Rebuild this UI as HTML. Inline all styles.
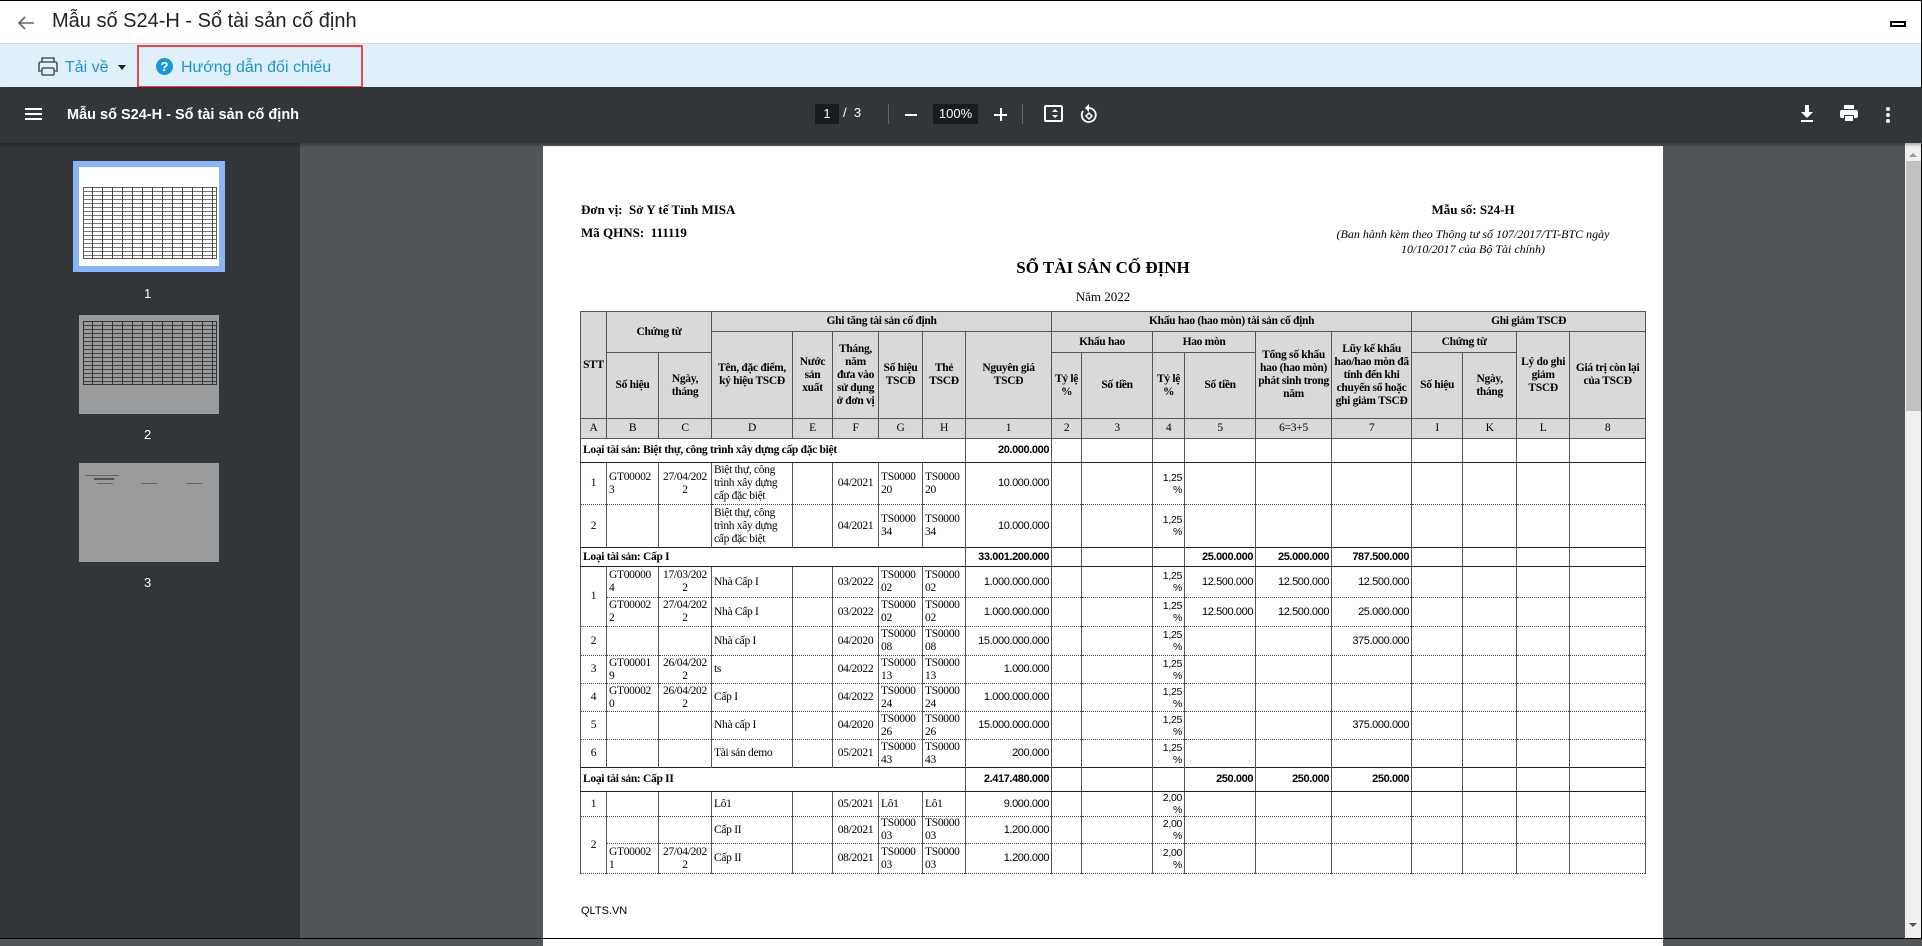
<!DOCTYPE html>
<html><head><meta charset="utf-8">
<style>
*{margin:0;padding:0;box-sizing:border-box}
body{width:1922px;height:939px;overflow:hidden;position:relative;background:#525659;font-family:"Liberation Sans",sans-serif}
.abs{position:absolute}
#tb{left:0;top:0;width:1922px;height:44px;background:#fff;border-bottom:1px solid #d6d6d6;border-top:1px solid #000;border-right:1px solid #000}
#t2{left:0;top:44px;width:1922px;height:43px;background:#dff0fb;border-right:1px solid #000}
#t3{left:0;top:87px;width:1922px;height:56px;background:#323639;box-shadow:0 2px 3px rgba(0,0,0,.3);z-index:2}
#side{left:0;top:143px;width:300px;height:796px;background:#323639}
#page{left:543px;top:146px;width:1120px;height:800px;background:#fff}
#sb{left:1905px;top:143px;width:17px;height:796px;background:#f0f0f0}
.serif{font-family:"Liberation Serif",serif}
table{border-collapse:collapse;table-layout:fixed;position:absolute;left:37px;top:165px;width:1065px;font-family:"Liberation Serif",serif;font-size:11.5px;letter-spacing:-0.3px;color:#000}
td{border-left:1.5px solid #555;border-right:1.5px solid #555;padding:0 2px;vertical-align:middle;line-height:13px;overflow:hidden}
thead td{background:#d9d9d9;border:1.5px solid #555;text-align:center;font-weight:bold}
tbody td{border-top:1px dotted #444;border-bottom:1px dotted #444}
tr.lo td{border-top:1.5px solid #222;border-bottom:1.5px solid #222;font-weight:bold}
.n{font-family:"Liberation Sans",sans-serif;font-size:11px;text-align:right;letter-spacing:-0.4px}
.c{text-align:center}
.p{font-family:"Liberation Sans",sans-serif;font-size:10.5px;text-align:right;line-height:12px}
</style></head><body>
<div id="tb" class="abs">
  <svg class="abs" style="left:16px;top:13px" width="20" height="18" viewBox="0 0 20 18"><path d="M18 9H3M9 3L3 9l6 6" stroke="#666" stroke-width="1.6" fill="none"/></svg>
  <div class="abs" style="left:52px;top:9px;font-size:20px;color:#222">Mẫu số S24-H - Sổ tài sản cố định</div>
  <div class="abs" style="left:1890px;top:20px;width:16px;height:6px;border:2px solid #000"></div>
</div>
<div id="t2" class="abs">
  <svg class="abs" style="left:37px;top:12px" width="22" height="21" viewBox="0 0 22 21"><path d="M5 6V2h12v4M4 15H2V8q0-2 2-2h14q2 0 2 2v7h-2" stroke="#555" stroke-width="1.6" fill="none"/><rect x="5" y="12" width="12" height="7" rx="1" stroke="#555" stroke-width="1.6" fill="none"/></svg>
  <div class="abs" style="left:65px;top:15px;font-size:16px;color:#1f93c9">Tải về</div>
  <div class="abs" style="left:118px;top:21px;width:0;height:0;border-left:4px solid transparent;border-right:4px solid transparent;border-top:5px solid #222"></div>
  <div class="abs" style="left:137px;top:1px;width:226px;height:43px;border:2px solid #f0454a"></div>
  <div class="abs" style="left:156px;top:14px;width:17px;height:17px;border-radius:50%;background:#1b9ad0;color:#fff;font-size:13px;font-weight:bold;text-align:center;line-height:17px">?</div>
  <div class="abs" style="left:181px;top:15px;font-size:16px;color:#1f93c9">Hướng dẫn đối chiếu</div>
</div>
<div id="t3" class="abs">
  <div class="abs" style="left:25px;top:21px;width:17px;height:2px;background:#fff;box-shadow:0 5px 0 #fff,0 10px 0 #fff"></div>
  <div class="abs" style="left:67px;top:20px;font-size:14.5px;font-weight:bold;color:#fff">Mẫu số S24-H - Sổ tài sản cố định</div>
  <div class="abs" style="left:815px;top:17px;width:24px;height:20px;background:#191b1c;color:#fff;font-size:13px;text-align:center;line-height:20px">1</div>
  <div class="abs" style="left:843px;top:18px;color:#fff;font-size:13px">/&nbsp; 3</div>
  <div class="abs" style="left:888px;top:17px;width:1px;height:20px;background:#666"></div>
  <div class="abs" style="left:905px;top:27px;width:12px;height:2px;background:#fff"></div>
  <div class="abs" style="left:933px;top:17px;width:45px;height:20px;background:#191b1c;color:#fff;font-size:13px;text-align:center;line-height:20px">100%</div>
  <div class="abs" style="left:994px;top:27px;width:13px;height:2px;background:#fff"></div>
  <div class="abs" style="left:1000px;top:21px;width:2px;height:13px;background:#fff"></div>
  <div class="abs" style="left:1022px;top:17px;width:1px;height:20px;background:#666"></div>
  <div class="abs" style="left:1044px;top:18px;width:19px;height:17px;border:2px solid #fff;border-radius:2px"></div>
  <div class="abs" style="left:1052px;top:22px;width:0;height:0;border-left:3px solid transparent;border-right:3px solid transparent;border-bottom:3px solid #fff"></div>
  <div class="abs" style="left:1052px;top:28px;width:0;height:0;border-left:3px solid transparent;border-right:3px solid transparent;border-top:3px solid #fff"></div>
  <svg class="abs" style="left:1079px;top:16px" width="20" height="22" viewBox="0 0 20 22"><path d="M10 5a7 7 0 1 1-6 3" stroke="#fff" stroke-width="1.8" fill="none"/><path d="M10 1v8l-4-4z" fill="#fff"/><path d="M10 10l3 3-3 3-3-3z" stroke="#fff" stroke-width="1.5" fill="none"/></svg>
  <svg class="abs" style="left:1800px;top:17px" width="14" height="20" viewBox="0 0 14 20"><path d="M5 1h4v7h4l-6 6-6-6h4z" fill="#fff"/><rect x="1" y="16" width="12" height="2" fill="#fff"/></svg>
  <svg class="abs" style="left:1840px;top:18px" width="18" height="17" viewBox="0 0 18 17"><rect x="4" y="0" width="10" height="4" fill="#fff"/><rect x="0" y="5" width="18" height="8" rx="2" fill="#fff"/><rect x="4" y="10" width="10" height="7" fill="#323639"/><rect x="5" y="11" width="8" height="5" fill="#fff"/></svg>
  <div class="abs" style="left:1886px;top:20px;width:4px;height:4px;border-radius:50%;background:#fff;box-shadow:0 6px 0 #fff,0 12px 0 #fff"></div>
</div>
<div id="side" class="abs">
  <div class="abs" style="left:73px;top:18px;width:152px;height:111px;background:#8ab4f8"></div>
  <div class="abs" style="left:79px;top:24px;width:140px;height:99px;background:#fff">
    <div class="abs" style="left:4px;top:20px;width:134px;height:72px;border:1px solid #333;background:repeating-linear-gradient(#fff 0 3px,#555 3px 4px),#fff;opacity:.8"></div>
    <div class="abs" style="left:4px;top:20px;width:134px;height:72px;background:repeating-linear-gradient(90deg,transparent 0 9px,#444 9px 10px)"></div>
  </div>
  <div class="abs" style="left:144px;top:143px;color:#fff;font-size:13px">1</div>
  <div class="abs" style="left:79px;top:172px;width:140px;height:99px;background:#9a9b9d">
    <div class="abs" style="left:4px;top:6px;width:134px;height:64px;border:1px solid #333;background:repeating-linear-gradient(#9a9b9d 0 3px,#444 3px 4px)"></div>
    <div class="abs" style="left:4px;top:6px;width:134px;height:64px;background:repeating-linear-gradient(90deg,transparent 0 9px,#333 9px 10px)"></div>
  </div>
  <div class="abs" style="left:144px;top:284px;color:#fff;font-size:13px">2</div>
  <div class="abs" style="left:79px;top:320px;width:140px;height:99px;background:#9a9b9d">
    <div class="abs" style="left:6px;top:12px;width:34px;height:1px;background:#666"></div>
    <div class="abs" style="left:15px;top:15px;width:20px;height:2px;background:#555"></div>
    <div class="abs" style="left:18px;top:20px;width:16px;height:1px;background:#666"></div>
    <div class="abs" style="left:62px;top:20px;width:16px;height:1px;background:#666"></div>
    <div class="abs" style="left:107px;top:20px;width:16px;height:1px;background:#666"></div>
  </div>
  <div class="abs" style="left:144px;top:432px;color:#fff;font-size:13px">3</div>
</div>
<div id="sb" class="abs">
  <div class="abs" style="left:4px;top:10px;width:0;height:0;border-left:4px solid transparent;border-right:4px solid transparent;border-bottom:4px solid #999"></div>
  <div class="abs" style="left:1px;top:18px;width:15px;height:250px;background:#c1c1c1"></div>
  <div class="abs" style="left:4px;top:780px;width:0;height:0;border-left:4px solid transparent;border-right:4px solid transparent;border-top:4px solid #555"></div>
</div>
<div id="page" class="abs serif">
  <div class="abs" style="left:38px;top:56px;font-size:13px;font-weight:bold">Đơn vị:&nbsp; Sở Y tế Tỉnh MISA</div>
  <div class="abs" style="left:38px;top:79px;font-size:13px;font-weight:bold">Mã QHNS:&nbsp; 111119</div>
  <div class="abs" style="left:780px;top:56px;width:300px;text-align:center;font-size:13px;font-weight:bold">Mẫu số: S24-H</div>
  <div class="abs" style="left:770px;top:81px;width:320px;text-align:center;font-size:12px;font-style:italic;line-height:15px">(Ban hành kèm theo Thông tư số 107/2017/TT-BTC ngày 10/10/2017 của Bộ Tài chính)</div>
  <div class="abs" style="left:400px;top:112px;width:320px;text-align:center;font-size:17px;font-weight:bold">SỔ TÀI SẢN CỐ ĐỊNH</div>
  <div class="abs" style="left:400px;top:143px;width:320px;text-align:center;font-size:13px">Năm 2022</div>
  <table>
    <colgroup><col style="width:26px"><col style="width:52px"><col style="width:53px"><col style="width:81px"><col style="width:40px"><col style="width:46px"><col style="width:44px"><col style="width:43px"><col style="width:86px"><col style="width:30px"><col style="width:71px"><col style="width:32px"><col style="width:71px"><col style="width:76px"><col style="width:80px"><col style="width:51px"><col style="width:54px"><col style="width:53px"><col style="width:76px"></colgroup>
    <thead>
      <tr style="height:20px"><td rowspan="3">STT</td><td colspan="2" rowspan="2">Chứng từ</td><td colspan="6">Ghi tăng tài sản cố định</td><td colspan="6">Khấu hao (hao mòn) tài sản cố định</td><td colspan="4">Ghi giảm TSCĐ</td></tr>
      <tr style="height:21px"><td rowspan="2">Tên, đặc điểm, ký hiệu TSCĐ</td><td rowspan="2">Nước sản xuất</td><td rowspan="2">Tháng, năm đưa vào sử dụng ở đơn vị</td><td rowspan="2">Số hiệu TSCĐ</td><td rowspan="2">Thẻ TSCĐ</td><td rowspan="2">Nguyên giá TSCĐ</td><td colspan="2">Khấu hao</td><td colspan="2">Hao mòn</td><td rowspan="2">Tổng số khấu hao (hao mòn) phát sinh trong năm</td><td rowspan="2">Lũy kế khấu hao/hao mòn đã tính đến khi chuyển sổ hoặc ghi giảm TSCĐ</td><td colspan="2">Chứng từ</td><td rowspan="2">Lý do ghi giảm TSCĐ</td><td rowspan="2">Giá trị còn lại của TSCĐ</td></tr>
      <tr style="height:66px"><td>Số hiệu</td><td>Ngày, tháng</td><td>Tỷ lệ %</td><td>Số tiền</td><td>Tỷ lệ %</td><td>Số tiền</td><td>Số hiệu</td><td>Ngày, tháng</td></tr>
      <tr style="height:20px"><td style="font-weight:normal">A</td><td style="font-weight:normal">B</td><td style="font-weight:normal">C</td><td style="font-weight:normal">D</td><td style="font-weight:normal">E</td><td style="font-weight:normal">F</td><td style="font-weight:normal">G</td><td style="font-weight:normal">H</td><td style="font-weight:normal">1</td><td style="font-weight:normal">2</td><td style="font-weight:normal">3</td><td style="font-weight:normal">4</td><td style="font-weight:normal">5</td><td style="font-weight:normal">6=3+5</td><td style="font-weight:normal">7</td><td style="font-weight:normal">I</td><td style="font-weight:normal">K</td><td style="font-weight:normal">L</td><td style="font-weight:normal">8</td></tr>
    </thead>
    <tbody>
      <tr class="lo" style="height:24px"><td colspan="8">Loại tài sản: Biệt thự, công trình xây dựng cấp đặc biệt</td><td class="n">20.000.000</td><td></td><td></td><td></td><td></td><td></td><td></td><td></td><td></td><td></td><td></td></tr>
      <tr style="height:42px"><td class="c">1</td><td>GT00002<br>3</td><td class="c">27/04/202<br>2</td><td>Biệt thự, công trình xây dựng cấp đặc biệt</td><td></td><td class="c">04/2021</td><td>TS0000<br>20</td><td>TS0000<br>20</td><td class="n">10.000.000</td><td></td><td></td><td class="p">1,25<br>%</td><td></td><td></td><td></td><td></td><td></td><td></td><td></td></tr>
      <tr style="height:43px"><td class="c">2</td><td></td><td></td><td>Biệt thự, công trình xây dựng cấp đặc biệt</td><td></td><td class="c">04/2021</td><td>TS0000<br>34</td><td>TS0000<br>34</td><td class="n">10.000.000</td><td></td><td></td><td class="p">1,25<br>%</td><td></td><td></td><td></td><td></td><td></td><td></td><td></td></tr>
      <tr class="lo" style="height:19px"><td colspan="8">Loại tài sản: Cấp I</td><td class="n">33.001.200.000</td><td></td><td></td><td></td><td class="n">25.000.000</td><td class="n">25.000.000</td><td class="n">787.500.000</td><td></td><td></td><td></td><td></td></tr>
      <tr style="height:31px"><td class="c" rowspan="2">1</td><td>GT00000<br>4</td><td class="c">17/03/202<br>2</td><td>Nhà Cấp I</td><td></td><td class="c">03/2022</td><td>TS0000<br>02</td><td>TS0000<br>02</td><td class="n">1.000.000.000</td><td></td><td></td><td class="p">1,25<br>%</td><td class="n">12.500.000</td><td class="n">12.500.000</td><td class="n">12.500.000</td><td></td><td></td><td></td><td></td></tr>
      <tr style="height:29px"><td>GT00002<br>2</td><td class="c">27/04/202<br>2</td><td>Nhà Cấp I</td><td></td><td class="c">03/2022</td><td>TS0000<br>02</td><td>TS0000<br>02</td><td class="n">1.000.000.000</td><td></td><td></td><td class="p">1,25<br>%</td><td class="n">12.500.000</td><td class="n">12.500.000</td><td class="n">25.000.000</td><td></td><td></td><td></td><td></td></tr>
      <tr style="height:29px"><td class="c">2</td><td></td><td></td><td>Nhà cấp I</td><td></td><td class="c">04/2020</td><td>TS0000<br>08</td><td>TS0000<br>08</td><td class="n">15.000.000.000</td><td></td><td></td><td class="p">1,25<br>%</td><td></td><td></td><td class="n">375.000.000</td><td></td><td></td><td></td><td></td></tr>
      <tr style="height:28px"><td class="c">3</td><td>GT00001<br>9</td><td class="c">26/04/202<br>2</td><td>ts</td><td></td><td class="c">04/2022</td><td>TS0000<br>13</td><td>TS0000<br>13</td><td class="n">1.000.000</td><td></td><td></td><td class="p">1,25<br>%</td><td></td><td></td><td></td><td></td><td></td><td></td><td></td></tr>
      <tr style="height:28px"><td class="c">4</td><td>GT00002<br>0</td><td class="c">26/04/202<br>2</td><td>Cấp I</td><td></td><td class="c">04/2022</td><td>TS0000<br>24</td><td>TS0000<br>24</td><td class="n">1.000.000.000</td><td></td><td></td><td class="p">1,25<br>%</td><td></td><td></td><td></td><td></td><td></td><td></td><td></td></tr>
      <tr style="height:28px"><td class="c">5</td><td></td><td></td><td>Nhà cấp I</td><td></td><td class="c">04/2020</td><td>TS0000<br>26</td><td>TS0000<br>26</td><td class="n">15.000.000.000</td><td></td><td></td><td class="p">1,25<br>%</td><td></td><td></td><td class="n">375.000.000</td><td></td><td></td><td></td><td></td></tr>
      <tr style="height:28px"><td class="c">6</td><td></td><td></td><td>Tài sản demo</td><td></td><td class="c">05/2021</td><td>TS0000<br>43</td><td>TS0000<br>43</td><td class="n">200.000</td><td></td><td></td><td class="p">1,25<br>%</td><td></td><td></td><td></td><td></td><td></td><td></td><td></td></tr>
      <tr class="lo" style="height:24px"><td colspan="8">Loại tài sản: Cấp II</td><td class="n">2.417.480.000</td><td></td><td></td><td></td><td class="n">250.000</td><td class="n">250.000</td><td class="n">250.000</td><td></td><td></td><td></td><td></td></tr>
      <tr style="height:25px"><td class="c">1</td><td></td><td></td><td>Lô1</td><td></td><td class="c">05/2021</td><td>Lô1</td><td>Lô1</td><td class="n">9.000.000</td><td></td><td></td><td class="p">2,00<br>%</td><td></td><td></td><td></td><td></td><td></td><td></td><td></td></tr>
      <tr style="height:27px"><td class="c" rowspan="2">2</td><td></td><td></td><td>Cấp II</td><td></td><td class="c">08/2021</td><td>TS0000<br>03</td><td>TS0000<br>03</td><td class="n">1.200.000</td><td></td><td></td><td class="p">2,00<br>%</td><td></td><td></td><td></td><td></td><td></td><td></td><td></td></tr>
      <tr style="height:30px"><td>GT00002<br>1</td><td class="c">27/04/202<br>2</td><td>Cấp II</td><td></td><td class="c">08/2021</td><td>TS0000<br>03</td><td>TS0000<br>03</td><td class="n">1.200.000</td><td></td><td></td><td class="p">2,00<br>%</td><td></td><td></td><td></td><td></td><td></td><td></td><td></td></tr>
    </tbody>
  </table>
  <div class="abs" style="left:38px;top:759px;font-family:'Liberation Sans',sans-serif;font-size:11px">QLTS.VN</div>
</div>
<div class="abs" style="left:0;top:938px;width:1922px;height:1px;background:#000"></div>
<div class="abs" style="left:1921px;top:0;width:1px;height:939px;background:#000"></div>
</body></html>
